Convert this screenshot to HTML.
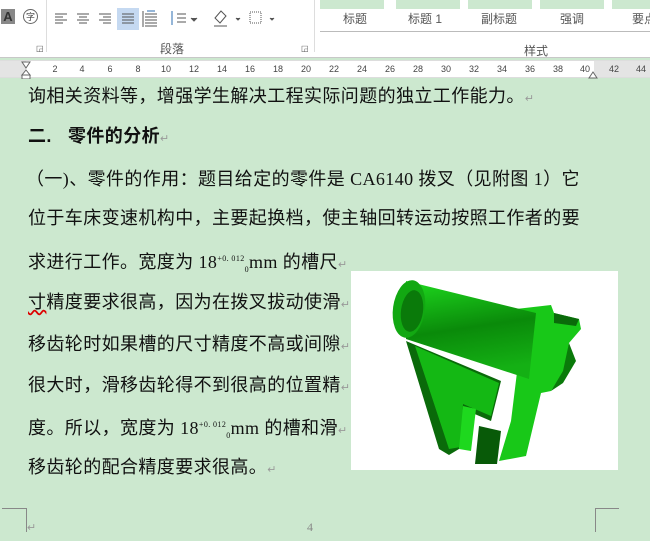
<!DOCTYPE html>
<html><head><meta charset="utf-8"><style>
*{margin:0;padding:0;box-sizing:border-box}
body{width:650px;height:541px;overflow:hidden;background:#cce8cf;position:relative;font-family:"Liberation Serif","Noto Sans CJK SC",serif;color:#111}
.rib{position:absolute;left:0;top:0;width:650px;height:58px;background:#fff;border-bottom:1px solid #c8c8c8}
.abs{position:absolute}
.ui{font-family:"Liberation Sans","Noto Sans CJK SC",sans-serif;color:#555;font-size:12px;white-space:nowrap}
.ruler{position:absolute;left:0;top:60px;width:650px;height:18px;background:#fff;border-top:1px solid #ddd;border-bottom:1px solid #ddd}
.ruler span{position:absolute;top:3px;font-size:9px;color:#444;font-family:"Liberation Sans",sans-serif;transform:translateX(-50%)}
.t{position:absolute;left:28px;font-size:18px;letter-spacing:0.4px;white-space:nowrap;line-height:20px;height:20px}
.pm{color:#999;font-size:11px}
.sup{font-size:8px;position:relative;top:-7px;line-height:0}
.sub{font-size:8px;position:relative;top:4px;line-height:0}
</style></head><body>
<div class="rib">
 <div class="abs" style="left:1px;top:9px;width:14px;height:15px;background:#888;color:#333;font:bold 13px 'Liberation Sans';text-align:center;line-height:15px">A</div>
 <div class="abs" style="left:23px;top:9px;width:15px;height:15px;border:1px solid #666;border-radius:50%;font:9px 'Noto Sans CJK SC';text-align:center;line-height:13px;color:#444">字</div>
 <div class="abs" style="left:46px;top:0;width:1px;height:52px;background:#ddd"></div>
 <svg class="abs" style="left:52px;top:8px" width="160" height="24" stroke="#555" stroke-width="1" fill="none">
  <path d="M3 6h12M3 9h8M3 12h12M3 15h8"/>
  <path d="M25 6h12M27 9h8M25 12h12M27 15h8"/>
  <path d="M47 6h12M51 9h8M47 12h12M51 15h8"/>
  <rect x="65" y="0" width="22" height="22" fill="#c5d9f1" stroke="none"/>
  <path d="M70 6h12M70 9h12M70 12h12M70 15h12"/>
  <path d="M91 3v16M93 6h12M93 9h12M93 12h12M93 15h12M93 18h12" />
  <path d="M95 3h8" stroke="#2b6cb0"/>
  <path d="M120 3v14" stroke="#2b6cb0"/><path d="M125 6h9M125 10h9M125 14h9"/>
  <path d="M139 10l3 3 3-3" fill="#555"/>
 </svg>
 <svg class="abs" style="left:210px;top:8px" width="100" height="24" stroke="#555" fill="none">
  <path d="M5 10l6-7 5 5-6 7z"/><path d="M4 18h13"/><path d="M26 10l2 2 2-2" fill="#555"/>
  <rect x="40" y="4" width="11" height="11" stroke-dasharray="1 1"/><path d="M60 10l2 2 2-2" fill="#555"/>
 </svg>
 <div class="abs" style="left:314px;top:0;width:1px;height:52px;background:#ddd"></div>
 <div class="abs ui" style="left:160px;top:40px">段落</div>
 <div class="abs ui" style="left:36px;top:44px;font-size:8px">◲</div>
 <div class="abs ui" style="left:301px;top:44px;font-size:8px">◲</div>
 <div class="abs" style="left:320px;top:0;width:64px;height:9px;background:#cce8cf"></div>
 <div class="abs" style="left:396px;top:0;width:64px;height:9px;background:#cce8cf"></div>
 <div class="abs" style="left:468px;top:0;width:64px;height:9px;background:#cce8cf"></div>
 <div class="abs" style="left:540px;top:0;width:64px;height:9px;background:#cce8cf"></div>
 <div class="abs" style="left:612px;top:0;width:40px;height:9px;background:#cce8cf"></div>
 <div class="abs ui" style="left:343px;top:10px">标题</div>
 <div class="abs ui" style="left:408px;top:10px">标题 1</div>
 <div class="abs ui" style="left:481px;top:10px">副标题</div>
 <div class="abs ui" style="left:560px;top:10px">强调</div>
 <div class="abs ui" style="left:632px;top:10px">要点</div>
 <div class="abs" style="left:320px;top:31px;width:330px;height:1px;background:#bbb"></div>
 <div class="abs ui" style="left:524px;top:42px">样式</div>
</div>
<div class="ruler">
 <div class="abs" style="left:0;top:0;width:26px;height:16px;background:#e4e4e4"></div>
 <div class="abs" style="left:594px;top:0;width:56px;height:16px;background:#e4e4e4"></div>
 <span style="left:55px">2</span><span style="left:82px">4</span><span style="left:110px">6</span><span style="left:138px">8</span><span style="left:166px">10</span><span style="left:194px">12</span><span style="left:222px">14</span><span style="left:250px">16</span><span style="left:278px">18</span><span style="left:306px">20</span><span style="left:334px">22</span><span style="left:362px">24</span><span style="left:390px">26</span><span style="left:418px">28</span><span style="left:446px">30</span><span style="left:474px">32</span><span style="left:502px">34</span><span style="left:530px">36</span><span style="left:558px">38</span><span style="left:585px">40</span><span style="left:614px">42</span><span style="left:641px">44</span>
 <svg class="abs" style="left:20px;top:0" width="12" height="18" stroke="#666" fill="#fff"><path d="M2 1h8l-4 6z"/><path d="M6 9l-4 5h8z M2 14h8v4H2z"/></svg>
 <svg class="abs" style="left:588px;top:9px" width="10" height="9" stroke="#666" fill="#fff"><path d="M1 8l4-6 4 6z"/></svg>
</div>
<div class="t" style="top:86px">询相关资料等，增强学生解决工程实际问题的独立工作能力。<span class="pm">↵</span></div>
<div class="t" style="top:126px;font-weight:bold;font-family:'Liberation Sans','Noto Sans CJK SC',sans-serif">二.&nbsp;&nbsp;&nbsp;零件的分析<span class="pm" style="font-weight:normal">↵</span></div>
<div class="t" style="top:169px;left:26px">（一)、零件的作用：题目给定的零件是 CA6140 拨叉（见附图 1）它</div>
<div class="t" style="top:208px">位于车床变速机构中，主要起换档，使主轴回转运动按照工作者的要</div>
<div class="t" style="top:252px">求进行工作。宽度为 18<span class="sup">+0. 012</span><span class="sub">0</span>mm 的槽尺<span class="pm">↵</span></div>
<div class="t" style="top:292px"><span style="text-decoration:underline wavy #d00">寸</span>精度要求很高，因为在拨叉拔动使滑<span class="pm">↵</span></div>
<div class="t" style="top:334px">移齿轮时如果槽的尺寸精度不高或间隙<span class="pm">↵</span></div>
<div class="t" style="top:375px">很大时，滑移齿轮得不到很高的位置精<span class="pm">↵</span></div>
<div class="t" style="top:418px">度。所以，宽度为 18<span class="sup">+0. 012</span><span class="sub">0</span>mm 的槽和滑<span class="pm">↵</span></div>
<div class="t" style="top:457px">移齿轮的配合精度要求很高。<span class="pm">↵</span></div>
<div class="abs" style="left:351px;top:271px;width:267px;height:199px;background:#fff">
<svg width="267" height="199" viewBox="0 0 267 199">
 <defs><linearGradient id="g" x1="0" y1="0" x2="0.2" y2="1"><stop offset="0" stop-color="#1ed81e"/><stop offset="0.55" stop-color="#0a8a0a"/><stop offset="1" stop-color="#14b014"/></linearGradient></defs>
 <!-- web -->
 <path d="M55 70 L150 110 L140 150 L112 138 L108 178 L98 184 L88 178 Z" fill="#0a6a0a"/>
 <path d="M64 75 L148 112 L140 145 L112 133 L110 176 L98 178 Z" fill="#14b814"/>
 <!-- foot -->
 <path d="M108 178 L112 135 L125 138 L120 180 Z" fill="#1ed81e"/>
 <path d="M128 155 L150 160 L146 193 L124 193 Z" fill="#085a08"/>
 <!-- flange -->
 <path d="M165 38 L200 34 L203 42 L228 48 L230 58 L218 72 L214 98 L200 120 L190 122 L175 185 L148 190 L160 150 L168 85 Z" fill="#18c818"/>
 <path d="M200 120 L212 100 L218 72 L225 90 L212 112 Z" fill="#0a7a0a"/>
 <path d="M203 42 L228 48 L225 55 L203 52 Z" fill="#0a6a0a"/>
 <!-- cylinder -->
 <path d="M55 10 L185 42 L178 108 L55 68 Z" fill="url(#g)"/>
 <ellipse cx="58" cy="38" rx="16" ry="29" fill="#12a812" transform="rotate(8 58 38)"/>
 <ellipse cx="61" cy="40" rx="11" ry="21" fill="#0a7a0a" transform="rotate(8 61 40)"/>
</svg>
</div>
<div class="abs" style="left:2px;top:508px;width:24px;height:1px;background:#888"></div>
<div class="abs" style="left:26px;top:508px;width:1px;height:24px;background:#888"></div>
<div class="abs pm" style="left:27px;top:521px">↵</div>
<div class="abs" style="left:595px;top:508px;width:24px;height:1px;background:#888"></div>
<div class="abs" style="left:595px;top:508px;width:1px;height:24px;background:#888"></div>
<div class="abs" style="left:307px;top:520px;font-size:12px;color:#888">4</div>
</body></html>
